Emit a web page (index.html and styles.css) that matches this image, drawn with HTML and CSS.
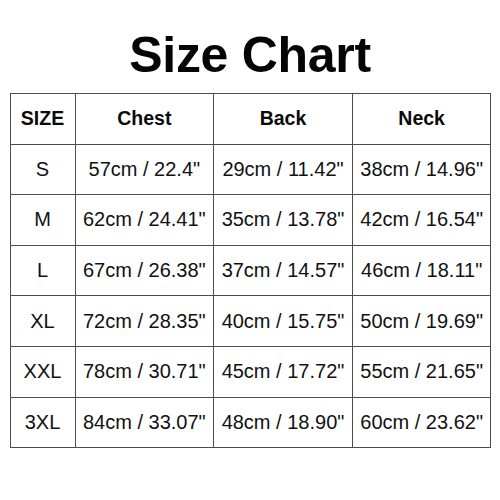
FILE: index.html
```html
<!DOCTYPE html>
<html>
<head>
<meta charset="utf-8">
<link rel="stylesheet" href="styles.css">
</head>
<body>
<div class="page">
  <h1 class="title">Size Chart</h1>
  <table class="chart">
    <colgroup>
      <col class="c-size"><col class="c-m"><col class="c-m"><col class="c-m">
    </colgroup>
    <thead>
      <tr><th>SIZE</th><th>Chest</th><th>Back</th><th>Neck</th></tr>
    </thead>
    <tbody>
      <tr><td>S</td><td>57cm / 22.4"</td><td>29cm / 11.42"</td><td>38cm / 14.96"</td></tr>
      <tr><td>M</td><td>62cm / 24.41"</td><td>35cm / 13.78"</td><td>42cm / 16.54"</td></tr>
      <tr><td>L</td><td>67cm / 26.38"</td><td>37cm / 14.57"</td><td>46cm / 18.11"</td></tr>
      <tr><td>XL</td><td>72cm / 28.35"</td><td>40cm / 15.75"</td><td>50cm / 19.69"</td></tr>
      <tr><td>XXL</td><td>78cm / 30.71"</td><td>45cm / 17.72"</td><td>55cm / 21.65"</td></tr>
      <tr><td>3XL</td><td>84cm / 33.07"</td><td>48cm / 18.90"</td><td>60cm / 23.62"</td></tr>
    </tbody>
  </table>
</div>
</body>
</html>
```
FILE: styles.css
```css
html, body {
  margin: 0;
  padding: 0;
  background: #ffffff;
}
.page {
  width: 500px;
  height: 500px;
  display: flex;
  flex-direction: column;
  align-items: center;
  font-family: "Liberation Sans", Arial, sans-serif;
  color: #111111;
}
.title {
  margin: 0;
  height: 93px;
  display: flex;
  align-items: center;
  padding-top: 16px;
  box-sizing: border-box;
  font-size: 50px;
  font-weight: bold;
  letter-spacing: -0.3px;
  color: #050505;
}
.chart {
  border-collapse: collapse;
  width: 481px;
  margin-left: 1px;
  table-layout: fixed;
}
.c-size { width: 65px; }
.c-m { width: 138.67px; }
.chart th,
.chart td {
  border: 1px solid #4d4d4d;
  height: 49.6px;
  padding: 0;
  text-align: center;
  vertical-align: middle;
  white-space: nowrap;
}
.chart th {
  font-size: 19.5px;
  font-weight: bold;
  color: #0a0a0a;
}
.chart td {
  font-size: 20px;
  color: #111111;
}
```
